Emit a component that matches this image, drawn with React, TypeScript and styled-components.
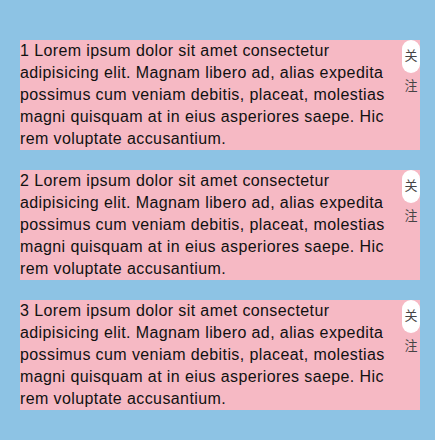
import React from 'react';
import styled, { createGlobalStyle } from 'styled-components';

const GlobalStyle = createGlobalStyle`
  html, body {
    margin: 0;
    padding: 0;
    background: #8dc3e4;
  }
  body {
    font-family: "Liberation Sans", Arial, "Noto Sans CJK SC", sans-serif;
  }
`;

const Page = styled.div`
  min-height: 440px;
  box-sizing: border-box;
  padding: 40px 15px 30px 20px;
  display: flex;
  flex-direction: column;
  gap: 20px;
`;

const Item = styled.div`
  width: 400px;
  height: 110px;
  display: flex;
  align-items: flex-start;
  background: #f6b9c4;
`;

const Content = styled.p`
  flex: 1;
  margin: 0;
  font-size: 16px;
  line-height: 22px;
  letter-spacing: 0.4px;
  color: #111;
`;

const FollowButton = styled.button`
  flex: none;
  width: 18px;
  height: 33px;
  margin: 0;
  padding: 0;
  border: none;
  border-radius: 9px;
  background: #fff;
  color: #444;
  font-family: "Noto Sans CJK SC", sans-serif;
  font-size: 13px;
  line-height: 30px;
  display: flex;
  align-items: flex-start;
  justify-content: center;
  overflow: visible;
  cursor: pointer;
`;

const Label = styled.span`
  display: block;
  width: 13px;
  word-break: break-all;
`;

const text =
  'Lorem ipsum dolor sit amet consectetur adipisicing elit. Magnam libero ad, alias expedita possimus cum veniam debitis, placeat, molestias magni quisquam at in eius asperiores saepe. Hic rem voluptate accusantium.';

const App: React.FC = () => {
  return (
    <>
      <GlobalStyle />
      <Page>
        {[1, 2, 3].map((n) => (
          <Item key={n}>
            <Content>
              {n} {text}
            </Content>
            <FollowButton>
              <Label>关注</Label>
            </FollowButton>
          </Item>
        ))}
      </Page>
    </>
  );
};

export default App;
